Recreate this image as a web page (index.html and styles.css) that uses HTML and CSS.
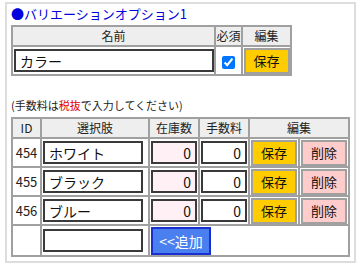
FILE: index.html
```html
<!DOCTYPE html>
<html lang="ja">
<head>
    <meta charset="UTF-8">
    <title>バリエーションオプション</title>
    <link rel="stylesheet" href="styles.css">
</head>
<body>
    <div class="option-box">
        <div class="option-title">●バリエーションオプション1</div>

        <table class="grid name-table">
            <tr>
                <th class="col-name">名前</th>
                <th class="col-req">必須</th>
                <th class="col-edit">編集</th>
            </tr>
            <tr>
                <td><input type="text" class="text-input wide" value="カラー"></td>
                <td class="center"><input type="checkbox" checked></td>
                <td class="center"><button class="btn btn-save">保存</button></td>
            </tr>
        </table>

        <p class="note">(手数料は<span class="red">税抜</span>で入力してください)</p>

        <table class="grid choice-table">
            <tr>
                <th class="col-id">ID</th>
                <th class="col-choice">選択肢</th>
                <th class="col-num">在庫数</th>
                <th class="col-num">手数料</th>
                <th colspan="2">編集</th>
            </tr>
            <tr>
                <td class="id">454</td>
                <td><input type="text" class="text-input" value="ホワイト"></td>
                <td><input type="text" class="num-input stock" value="0"></td>
                <td><input type="text" class="num-input" value="0"></td>
                <td class="center col-btn"><button class="btn btn-save">保存</button></td>
                <td class="center col-btn"><button class="btn btn-delete">削除</button></td>
            </tr>
            <tr>
                <td class="id">455</td>
                <td><input type="text" class="text-input" value="ブラック"></td>
                <td><input type="text" class="num-input stock" value="0"></td>
                <td><input type="text" class="num-input" value="0"></td>
                <td class="center col-btn"><button class="btn btn-save">保存</button></td>
                <td class="center col-btn"><button class="btn btn-delete">削除</button></td>
            </tr>
            <tr>
                <td class="id">456</td>
                <td><input type="text" class="text-input" value="ブルー"></td>
                <td><input type="text" class="num-input stock" value="0"></td>
                <td><input type="text" class="num-input" value="0"></td>
                <td class="center col-btn"><button class="btn btn-save">保存</button></td>
                <td class="center col-btn"><button class="btn btn-delete">削除</button></td>
            </tr>
            <tr class="add-row">
                <td></td>
                <td><input type="text" class="text-input" value=""></td>
                <td colspan="4"><button class="btn btn-add">&lt;&lt;追加</button></td>
            </tr>
        </table>
    </div>
</body>
</html>
```

FILE: styles.css
```css
body {
    margin: 0;
    padding: 2px 5px;
    font-family: "Noto Sans CJK JP", "Noto Sans", sans-serif;
    font-size: 13px;
    color: #222;
    background: #fff;
}

.option-box {
    width: 351px;
    box-sizing: border-box;
    border: 2px solid #ddd;
    padding: 1px 4px 4px 4px;
}

.option-title {
    color: #0000dd;
    font-size: 13px;
    line-height: 18px;
    margin-bottom: 2px;
}

.grid {
    border-collapse: collapse;
    border: 2px solid #a0a0a0;
    table-layout: fixed;
}

.grid th,
.grid td {
    border: 2px solid #a0a0a0;
    padding: 0;
}

.grid th {
    background-color: #eeeeee;
    font-weight: normal;
    font-size: 12px;
    height: 18px;
    line-height: 18px;
    text-align: center;
    white-space: nowrap;
}

.grid td {
    height: 27px;
}

.center {
    text-align: center;
}

.name-table {
    width: 279px;
}

.col-name { width: 201px; }
.col-req { width: 25px; }
.col-edit { width: 47px; }

.choice-table {
    width: 339px;
}

.col-id { width: 27px; }
.col-choice { width: 106px; }
.col-num { width: 48px; }
.col-btn { width: 48px; }

.id {
    text-align: center;
    font-size: 13px;
}

.text-input,
.num-input {
    box-sizing: border-box;
    height: 23px;
    border: 2px solid #3a3a3a;
    font-family: inherit;
    font-size: 14px;
    padding: 0 4px;
    margin: 0 0 0 1px;
    display: block;
    background: #fff;
    color: #111;
}

.text-input {
    width: 100px;
}

.text-input.wide {
    width: 200px;
}

.num-input {
    width: 46px;
    text-align: right;
}

.num-input.stock {
    background-color: #fff0f5;
}

input[type="checkbox"] {
    margin: 0;
    width: 13px;
    height: 13px;
    vertical-align: middle;
}

.btn {
    font-family: inherit;
    font-size: 13px;
    color: #111;
    border: 2px solid #a0a0a0;
    height: 26px;
    width: 46px;
    padding: 0;
    cursor: pointer;
    display: block;
    margin: 0 auto;
}

.btn-save {
    background-color: #ffcc00;
}

.btn-delete {
    background-color: #ffcccc;
}

.btn-add {
    background-color: #4a7ff0;
    border: 2px solid #1a2fd0;
    color: #fff;
    font-size: 14px;
    width: 60px;
    height: 28px;
    margin: 0 0 0 1px;
}

.add-row td {
    height: 29px;
}

.note {
    font-size: 11px;
    margin: 22px 0 5px 0;
    line-height: 14px;
}

.red {
    color: #e00000;
}
```
